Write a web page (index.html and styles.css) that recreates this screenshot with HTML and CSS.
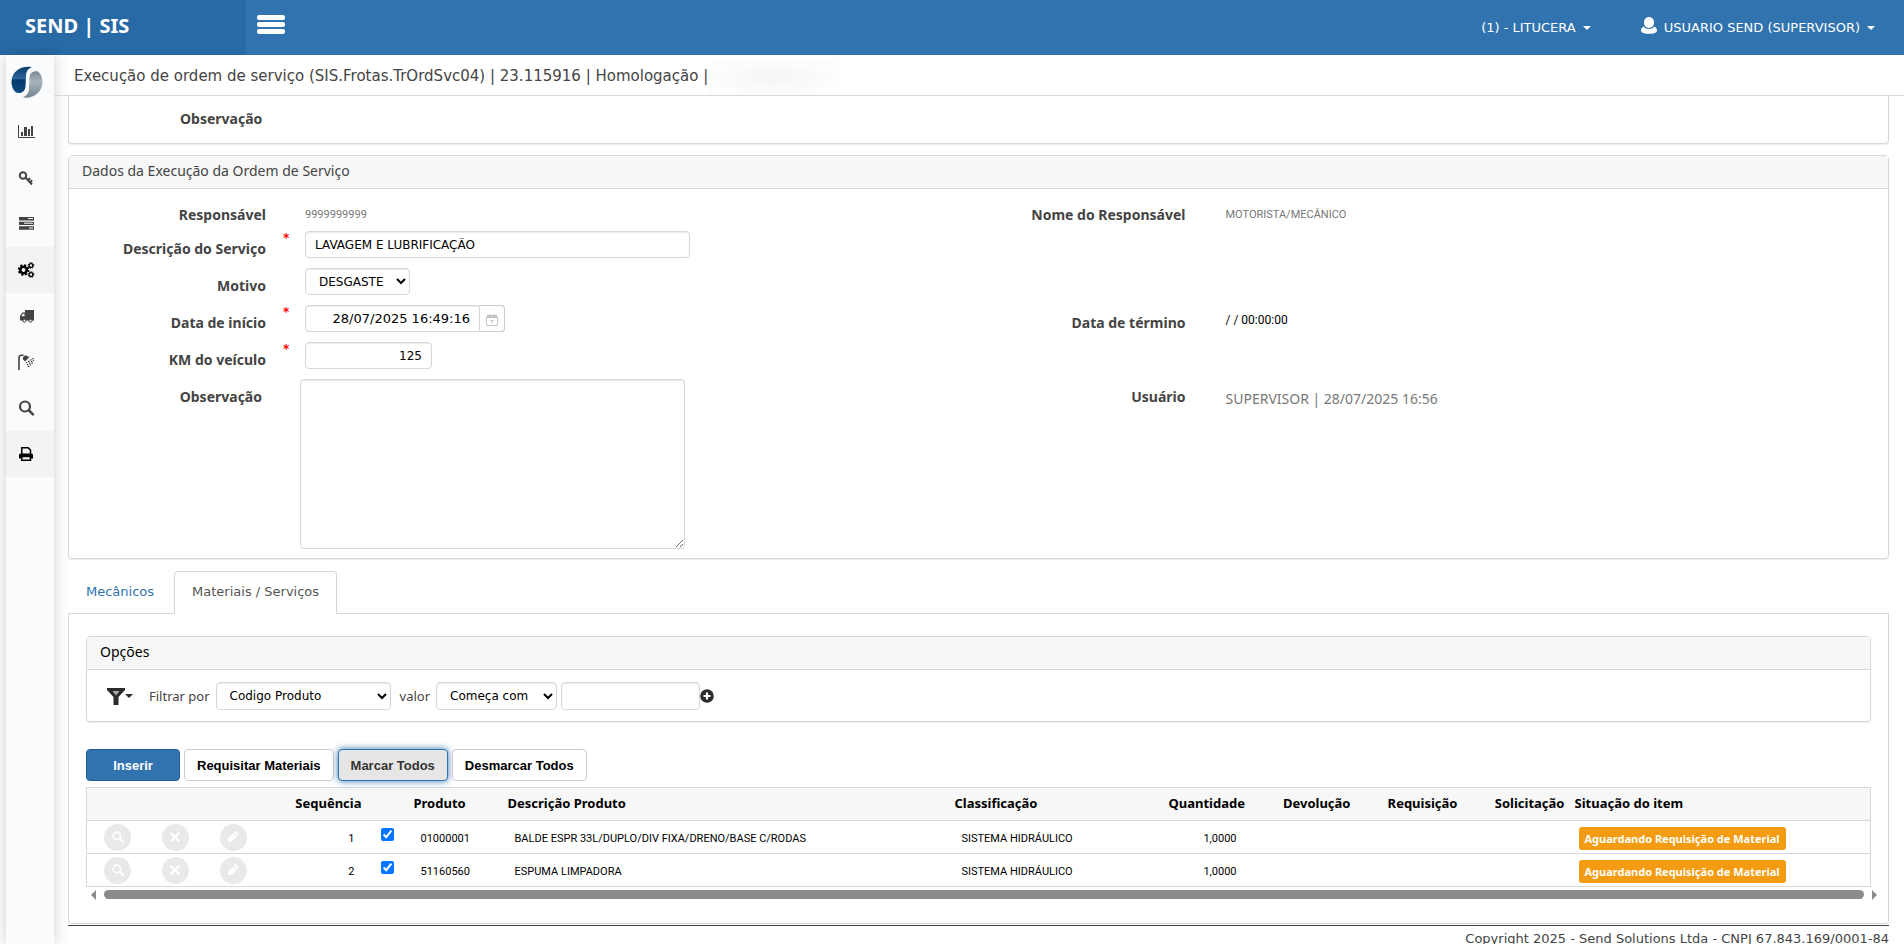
FILE: index.html
```html
<!DOCTYPE html>
<html lang="pt-BR">

<head>
    <meta charset="UTF-8">
    <meta name="viewport" content="width=device-width, initial-scale=1.0">
    <title>SEND | SIS</title>
    <link rel="stylesheet" href="styles.css">
</head>

<body>
    <!-- icons used more than once -->
    <svg class="sprite" aria-hidden="true">
        <symbol id="i-search" viewBox="0 0 16 16">
            <circle cx="6.5" cy="6.5" r="5" fill="none" stroke="currentColor" stroke-width="2.2" />
            <path d="M10.2 10.2l4.2 4.2" stroke="currentColor" stroke-width="2.6" stroke-linecap="round" />
        </symbol>
        <symbol id="i-remove" viewBox="0 0 16 16">
            <path d="M3 3l10 10M13 3L3 13" stroke="currentColor" stroke-width="3" stroke-linecap="round" />
        </symbol>
        <symbol id="i-pencil" viewBox="0 0 16 16">
            <path d="M1 15l.6-5.400 6.600-6.600 4.800 4.800-6.600 6.600zM9.200 2l1.400-1.400c.5-.5 1.100-.5 1.600 0l3.200 3.200c.5.5.5 1.100 0 1.600L14 6.800z" fill="currentColor" />
        </symbol>
    </svg>

    <header class="topbar">
        <a class="brand" href="#">SEND | SIS</a>
        <button class="menu-toggle" aria-label="Menu"><span></span><span></span><span></span></button>
        <nav class="top-links">
            <a href="#">(1) - LITUCERA <i class="caret"></i></a>
            <a href="#">
                <svg class="user-icon" viewBox="0 0 16 17">
                    <rect x="3" y="0" width="10" height="11" rx="5" fill="#fff" />
                    <path d="M2.500 9.500C1 10.300 0 11.800 0 13.500 0 16 4 16.800 8 16.800s8-.8 8-3.300c0-1.700-1-3.200-2.500-4C12.300 11 10.500 12 8 12S3.700 11 2.500 9.500z" fill="#fff" />
                </svg>
                USUARIO SEND (SUPERVISOR) <i class="caret"></i>
            </a>
        </nav>
    </header>

    <div class="wrapper">
        <nav class="sidebar">
            <a class="logo" href="#" aria-label="Send">
                <svg viewBox="0 0 32 32" width="32" height="32">
                    <defs>
                        <linearGradient id="g-blue" x1="0" y1="0" x2="0" y2="1">
                            <stop offset="0" stop-color="#0a3c6e" />
                            <stop offset=".45" stop-color="#2a659a" />
                            <stop offset=".5" stop-color="#06396c" />
                            <stop offset="1" stop-color="#0d4a80" />
                        </linearGradient>
                        <linearGradient id="g-gray" x1="0" y1="0" x2="0" y2="1">
                            <stop offset="0" stop-color="#7d8b95" />
                            <stop offset=".4" stop-color="#a9b4bb" />
                            <stop offset="1" stop-color="#74848f" />
                        </linearGradient>
                    </defs>
                    <path d="M21 1.300C11 -1 1 5 .5 15.500.3 20 2 24 5 26.500c5 1.500 9-.5 9.500-6L15 10c.3-4.500 2-7.500 6-8.700z" fill="url(#g-blue)" />
                    <path d="M27 5.500c-5-1-8.500 1.500-8.500 6L18 22c-.3 5-2 8-6.500 9.200C21 33.500 31 27 31.500 16.500c.1-4.500-1.500-8.500-4.500-11z" fill="url(#g-gray)" />
                </svg>
            </a>
            <a href="#" aria-label="Gráficos">
                <svg viewBox="0 0 17 16">
                    <path d="M.5 1v12.500H17" fill="none" stroke="currentColor" />
                    <path d="M3 8h2v4H3zM6 3h3v9H6zM10 5h2v7h-2zM13 2h2v10h-2z" fill="currentColor" />
                </svg>
            </a>
            <a href="#" aria-label="Acessos">
                <svg viewBox="0 0 17 16">
                    <circle cx="5" cy="5.500" r="3.200" fill="none" stroke="currentColor" stroke-width="2" />
                    <path d="M7.500 7.500l6.500 7M10 10l2.200-1.800M12.200 12.300l2-2" fill="none" stroke="currentColor" stroke-width="2" />
                </svg>
            </a>
            <a href="#" aria-label="Cadastros">
                <svg viewBox="0 0 17 16">
                    <path d="M1 1h15v3.400H1zM1 5.700h15v3.300H1zM1 10.300h15v3.400H1z" fill="currentColor" />
                    <path d="M10 2.500h5M6 7.200h9M11 12h4" stroke="#fff" />
                </svg>
            </a>
            <a class="active" href="#" aria-label="Processos">
                <svg viewBox="0 0 17 16">
                    <circle cx="5.500" cy="8" r="3.200" fill="none" stroke="currentColor" stroke-width="2.600" />
                    <circle cx="5.500" cy="8" r="4.900" fill="none" stroke="currentColor" stroke-width="1.800" stroke-dasharray="2.050 1.800" />
                    <circle cx="13" cy="3.500" r="1.900" fill="none" stroke="currentColor" stroke-width="1.400" />
                    <circle cx="13" cy="3.500" r="2.900" fill="none" stroke="currentColor" stroke-dasharray="1.200 1.080" />
                    <circle cx="13" cy="12.500" r="1.900" fill="none" stroke="currentColor" stroke-width="1.400" />
                    <circle cx="13" cy="12.500" r="2.900" fill="none" stroke="currentColor" stroke-dasharray="1.200 1.080" />
                </svg>
            </a>
            <a href="#" aria-label="Frotas">
                <svg viewBox="0 0 17 16">
                    <path fill-rule="evenodd" d="M7 2h9v10.500h-1.600a2 2 0 0 1-3.900 0H8.400a2 2 0 0 1-3.900 0H2V8l2.500-3.500H7zM6.500 5.700H5L3.400 8.200h3.100z" fill="currentColor" />
                    <circle cx="6.500" cy="12.700" r="1.500" fill="#fff" stroke="currentColor" />
                    <circle cx="12.500" cy="12.700" r="1.500" fill="#fff" stroke="currentColor" />
                </svg>
            </a>
            <a href="#" aria-label="Lavagem">
                <svg viewBox="0 0 17 16">
                    <path d="M1 16V3.500C1 1.500 2.500 1 5.500 1.300" fill="none" stroke="currentColor" stroke-width="1.600" />
                    <path d="M5 5.500c-.5-3 1.500-4.500 3.200-4 1 .2 1.600.8 2 1.500l2-.8L7 7.500z" fill="currentColor" />
                    <path d="M8 9l8-5M9 11l7-5M10 13l5-4.500" stroke="currentColor" stroke-width="1.200" stroke-dasharray="1.500 1" />
                </svg>
            </a>
            <a href="#" aria-label="Consultas"><svg><use href="#i-search" /></svg></a>
            <a class="active" href="#" aria-label="Relatórios">
                <svg viewBox="0 0 17 16">
                    <path d="M3.800 8V1.800h6.400l2.300 2.300V8" fill="none" stroke="currentColor" stroke-width="1.500" />
                    <path d="M1 12.500V9q0-1.500 1.500-1.500h11Q15 7.500 15 9v3.500h-2V10.500H3v2z" fill="currentColor" />
                    <path d="M3.800 10.500v3.700h8.700v-3.700z" fill="none" stroke="currentColor" stroke-width="1.500" />
                </svg>
            </a>
        </nav>

        <main class="page">
            <div class="page-title">
                <h1>Execução de ordem de serviço (SIS.Frotas.TrOrdSvc04) | 23.115916 | Homologação |</h1>
                <span class="hidden-name"></span>
            </div>

            <div class="content">
                <section class="panel panel-cut">
                    <span class="name">Observação</span>
                </section>

                <section class="panel">
                    <h2 class="panel-heading">Dados da Execução da Ordem de Serviço</h2>
                    <div class="form">
                        <div class="form-col">
                            <span class="name">Responsável</span><i></i>
                            <span class="value small">9999999999</span>

                            <label class="name" for="descricao">Descrição do Serviço</label><i class="req">*</i>
                            <input class="control w-long" id="descricao" type="text" value="LAVAGEM E LUBRIFICAÇÃO">

                            <label class="name" for="motivo">Motivo</label><i></i>
                            <select class="control w-reason" id="motivo">
                                <option>DESGASTE</option>
                            </select>

                            <label class="name" for="inicio">Data de início</label><i class="req">*</i>
                            <div class="date-group">
                                <input class="control" id="inicio" type="text" value="28/07/2025 16:49:16">
                                <button aria-label="Calendário">
                                    <svg viewBox="0 0 12 12" width="12" height="12">
                                        <path d="M.5 2.500h11v9H.5z" fill="none" stroke="#c4c4c4" />
                                        <path d="M1 1h10v3H1zM3 0h1v2H3zM8 0h1v2H8z" fill="#c4c4c4" />
                                        <path d="M4 6.500h3L5.500 9.500" fill="none" stroke="#c4c4c4" />
                                    </svg>
                                </button>
                            </div>

                            <label class="name" for="km">KM do veículo</label><i class="req">*</i>
                            <input class="control w-km" id="km" type="text" value="125">

                            <label class="name shift" for="obs">Observação</label><i></i>
                            <textarea class="control shift" id="obs"></textarea>
                        </div>
                        <div class="form-col right">
                            <span class="name">Nome do Responsável</span>
                            <span class="value small">MOTORISTA/MECÂNICO</span>
                            <span class="name row-4">Data de término</span>
                            <span class="value dark row-4">/ / 00:00:00</span>
                            <span class="name row-6">Usuário</span>
                            <span class="value row-6">SUPERVISOR | 28/07/2025 16:56</span>
                        </div>
                    </div>
                </section>

                <nav class="tabs">
                    <a href="#">Mecânicos</a>
                    <a class="current" href="#">Materiais / Serviços</a>
                </nav>
                <div class="tab-content">
                    <section class="panel">
                        <h2 class="panel-heading options">Opções</h2>
                        <div class="filter">
                            <button class="funnel" aria-label="Filtro">
                                <svg viewBox="0 0 18 18" width="18" height="18">
                                    <path d="M0 1h18v2l-6.500 7v8h-5v-8L0 3z" fill="#2b2b2b" />
                                    <path d="M5.500 4h7L9 8.500z" fill="#aaa" />
                                </svg>
                                <i class="caret"></i>
                            </button>
                            <label for="campo">Filtrar por</label>
                            <select class="control w-field" id="campo">
                                <option>Codigo Produto</option>
                            </select>
                            <label for="operador">valor</label>
                            <select class="control w-op" id="operador">
                                <option>Começa com</option>
                            </select>
                            <input class="control w-text" type="text" aria-label="Valor do filtro">
                            <button class="add" aria-label="Adicionar filtro">
                                <svg viewBox="0 0 14 14" width="14" height="14">
                                    <circle cx="7" cy="7" r="6.800" fill="#2b2b2b" />
                                    <path d="M7 3.500v7M3.500 7h7" stroke="#fff" stroke-width="2.200" />
                                </svg>
                            </button>
                        </div>
                    </section>

                    <div class="actions">
                        <button class="btn btn-primary">Inserir</button>
                        <button class="btn">Requisitar Materiais</button>
                        <button class="btn btn-focus">Marcar Todos</button>
                        <button class="btn">Desmarcar Todos</button>
                    </div>

                    <table class="items">
                        <colgroup>
                            <col class="c-icon"><col class="c-icon"><col class="c-icon">
                            <col class="c-seq"><col class="c-check"><col class="c-prod">
                            <col class="c-desc"><col class="c-class"><col class="c-qty">
                            <col class="c-num"><col class="c-num"><col class="c-num"><col>
                        </colgroup>
                        <thead>
                            <tr>
                                <th></th>
                                <th></th>
                                <th></th>
                                <th class="num">Sequência</th>
                                <th></th>
                                <th>Produto</th>
                                <th>Descrição Produto</th>
                                <th>Classificação</th>
                                <th class="num">Quantidade</th>
                                <th class="num">Devolução</th>
                                <th class="num">Requisição</th>
                                <th class="num">Solicitação</th>
                                <th>Situação do item</th>
                            </tr>
                        </thead>
                        <tbody>
                            <tr>
                                <td class="act"><button class="round" aria-label="Consultar"><svg><use href="#i-search" /></svg></button></td>
                                <td class="act"><button class="round" aria-label="Excluir"><svg><use href="#i-remove" /></svg></button></td>
                                <td class="act"><button class="round" aria-label="Editar"><svg><use href="#i-pencil" /></svg></button></td>
                                <td class="num">1</td>
                                <td class="check"><input type="checkbox" aria-label="Marcar item 1" checked></td>
                                <td>01000001</td>
                                <td>BALDE ESPR 33L/DUPLO/DIV FIXA/DRENO/BASE C/RODAS</td>
                                <td>SISTEMA HIDRÁULICO</td>
                                <td class="num">1,0000</td>
                                <td></td>
                                <td></td>
                                <td></td>
                                <td><span class="badge">Aguardando Requisição de Material</span></td>
                            </tr>
                            <tr>
                                <td class="act"><button class="round" aria-label="Consultar"><svg><use href="#i-search" /></svg></button></td>
                                <td class="act"><button class="round" aria-label="Excluir"><svg><use href="#i-remove" /></svg></button></td>
                                <td class="act"><button class="round" aria-label="Editar"><svg><use href="#i-pencil" /></svg></button></td>
                                <td class="num">2</td>
                                <td class="check"><input type="checkbox" aria-label="Marcar item 2" checked></td>
                                <td>51160560</td>
                                <td>ESPUMA LIMPADORA</td>
                                <td>SISTEMA HIDRÁULICO</td>
                                <td class="num">1,0000</td>
                                <td></td>
                                <td></td>
                                <td></td>
                                <td><span class="badge">Aguardando Requisição de Material</span></td>
                            </tr>
                        </tbody>
                    </table>
                    <div class="scroll">
                        <i class="arrow-left"></i>
                        <i class="thumb"></i>
                        <i class="arrow-right"></i>
                    </div>
                </div>

                <footer class="footer">Copyright 2025 - Send Solutions Ltda - CNPJ 67.843.169/0001-84</footer>
            </div>
        </main>
    </div>
</body>

</html>
```

FILE: styles.css
```css
* {
    padding: 0;
    margin: 0;
    box-sizing: border-box;
}

body {
    height: 100vh;
    overflow: hidden;
    display: flex;
    flex-direction: column;
    background-color: #fff;
    color: #444;
    font-family: "DejaVu Sans", sans-serif;
    font-size: 13px;
}

a {
    color: inherit;
    text-decoration: none;
}

button,
input,
select,
textarea {
    font-family: inherit;
    font-size: 12px;
}

button {
    border: 0;
    background: none;
}

.sprite {
    position: absolute;
    width: 0;
    height: 0;
}

.caret {
    display: inline-block;
    border-top: 4px solid;
    border-left: 4px solid transparent;
    border-right: 4px solid transparent;
}

/* top bar */
.topbar {
    display: flex;
    flex: none;
    height: 55px;
    background-color: #3173af;
    color: #fff;
}

.brand {
    width: 246px;
    padding-left: 25px;
    background-color: #286aa6;
    font-family: "Noto Sans", sans-serif;
    font-size: 20px;
    font-weight: bold;
    line-height: 52px;
}

.menu-toggle {
    display: flex;
    flex-direction: column;
    gap: 2px;
    width: 28px;
    margin: 15px 0 0 11px;
}

.menu-toggle span {
    width: 28px;
    height: 5px;
    border-radius: 2px;
    background-color: #fff;
}

.top-links {
    display: flex;
    gap: 50px;
    margin-left: auto;
    padding-right: 29px;
}

.top-links a {
    display: flex;
    align-items: center;
    gap: 7px;
}

.user-icon {
    width: 16px;
    height: 17px;
    margin-bottom: 4px;
}

/* side menu */
.wrapper {
    display: flex;
    flex: 1;
    min-height: 0;
}

.sidebar {
    flex: none;
    width: 48px;
    margin-left: 6px;
    background-color: #f9fbfd;
    box-shadow: 0 0 14px rgba(0, 0, 0, .2);
}

.sidebar a {
    display: flex;
    align-items: center;
    height: 46px;
    padding-left: 12px;
}

.sidebar a.logo {
    height: 54px;
    padding-left: 5px;
}

.sidebar a.active {
    background-color: #f3f3f3;
    color: #000;
}

.sidebar a:not(.logo) svg {
    width: 17px;
    height: 16px;
}

/* page */
.page {
    flex: 1;
    min-width: 0;
    overflow: hidden;
}

.page-title {
    display: flex;
    align-items: flex-end;
    height: 41px;
    padding-left: 20px;
    border-bottom: 1px solid #d8d8d8;
}

.page-title h1 {
    font-size: 15px;
    font-weight: normal;
    line-height: 38px;
}

.hidden-name {
    width: 131px;
    height: 34px;
    background: radial-gradient(closest-side, #f5f5f5, #fdfdfd);
}

.content {
    padding: 0 15px 0 14px;
}

.panel {
    border: 1px solid #d8d8d8;
    border-radius: 4px;
    box-shadow: 0 1px 1px rgba(0, 0, 0, .08);
}

.panel-cut {
    height: 48px;
    margin-bottom: 11px;
    padding: 13px 0 0 111px;
    border-top: 0;
    border-radius: 0 0 4px 4px;
}

.panel-heading {
    height: 33px;
    padding-left: 13px;
    border-bottom: 1px solid #d8d8d8;
    background-color: #f7f7f7;
    font-family: "Noto Sans", sans-serif;
    font-size: 14px;
    font-weight: normal;
    line-height: 30px;
}

.name {
    font-family: "Noto Sans", sans-serif;
    font-size: 14px;
    font-weight: bold;
    line-height: 20px;
}

.form {
    display: grid;
    grid-template-columns: 1fr 1fr;
    padding: 8px 0 9px;
}

.form-col {
    display: grid;
    grid-template-columns: 197px 39px 1fr;
    grid-template-rows: 24px repeat(4, 27px) 170px;
    row-gap: 10px;
    align-items: start;
}

.form-col.right {
    grid-template-columns: 207px 1fr;
    column-gap: 40px;
}

.form-col .name {
    padding-top: 8px;
    text-align: right;
}

.row-4 {
    grid-row: 4;
}

.row-6 {
    grid-row: 6;
}

.value {
    padding-top: 10px;
    color: #777;
    font-family: "Noto Sans", sans-serif;
    font-size: 14px;
    line-height: 20px;
}

.value.small {
    padding-top: 8px;
    font-family: Roboto, sans-serif;
    font-size: 11px;
}

.value.dark {
    padding-top: 5px;
    color: #000;
    font-family: Roboto, sans-serif;
    font-size: 12px;
}

.req {
    padding-left: 17px;
    color: #f00;
    font-style: normal;
    font-size: 12px;
    font-weight: bold;
    line-height: 14px;
}

.control {
    height: 27px;
    padding: 0 9px;
    border: 1px solid #d8d8d8;
    border-radius: 4px;
    background-color: #fff;
    box-shadow: inset 0 1px 1px rgba(0, 0, 0, .08);
    color: #000;
}

.form select.control {
    padding: 0 0 0 9px;
}

.w-long {
    width: 385px;
}

.w-reason {
    width: 105px;
}

.w-km {
    width: 127px;
    text-align: right;
}

textarea.control {
    width: 385px;
    height: 170px;
}

.form-col .name.shift {
    margin-right: 4px;
}

textarea.shift {
    margin-left: -5px;
}

.date-group {
    display: flex;
}

.date-group .control {
    width: 175px;
    border-radius: 4px 0 0 4px;
    font-size: 13px;
    text-align: right;
}

.date-group button {
    width: 25px;
    padding-top: 6px;
    border: 1px solid #ccc;
    border-left: 0;
    border-radius: 0 4px 4px 0;
}

/* tabs */
.tabs {
    display: flex;
    gap: 2px;
    margin-top: 12px;
    border-bottom: 1px solid #d8d8d8;
}

.tabs a {
    height: 42px;
    padding: 0 17px;
    border: 1px solid transparent;
    color: #3173af;
    line-height: 40px;
}

.tabs a.current {
    height: 43px;
    margin-bottom: -1px;
    border-color: #d8d8d8;
    border-bottom-color: #fff;
    border-radius: 4px 4px 0 0;
    color: #555;
}

.tab-content {
    padding: 22px 17px 21px;
    border: 1px solid #d8d8d8;
    border-top: 0;
    border-radius: 0 0 4px 4px;
}

.panel-heading.options {
    color: #000;
}

.filter {
    display: flex;
    align-items: center;
    height: 51px;
    padding-left: 20px;
    font-family: "Noto Sans", sans-serif;
}

.filter .control {
    height: 28px;
    font-family: "DejaVu Sans", sans-serif;
}

.funnel {
    display: flex;
    align-items: center;
    margin-right: 16px;
    color: #2b2b2b;
}

.w-field {
    width: 175px;
    margin: 0 9px 0 6px;
}

.w-op {
    width: 121px;
    margin: 0 4px 0 6px;
}

.w-text {
    width: 139px;
}

.add {
    height: 14px;
}

.actions {
    display: flex;
    gap: 4px;
    margin: 27px 0 6px;
}

.btn {
    height: 32px;
    padding: 0 12px;
    border: 1px solid #ccc;
    border-radius: 4px;
    background-color: #fff;
    color: #000;
    font-family: "Liberation Sans", sans-serif;
    font-size: 13px;
    font-weight: bold;
}

.btn-primary {
    width: 94px;
    border-color: #205d97;
    background-color: #3173af;
    color: #fff;
}

.btn-focus {
    border-color: #3173af;
    background-color: #e6e6e6;
    box-shadow: 0 0 7px #3173af;
    color: #333;
}

/* items table */
.items {
    width: 100%;
    border: 1px solid #d8d8d8;
    border-collapse: collapse;
    table-layout: fixed;
    color: #000;
    text-align: left;
}

.c-icon {
    width: 58px;
}

.c-seq {
    width: 106px;
}

.c-check {
    width: 42px;
}

.c-prod {
    width: 94px;
}

.c-desc {
    width: 447px;
}

.c-class {
    width: 214px;
}

.c-qty {
    width: 85px;
}

.c-num {
    width: 107px;
}

.items th {
    height: 33px;
    padding: 0 5px 2px;
    background-color: #f7f7f7;
    font-family: "Noto Sans", sans-serif;
    font-size: 13px;
    white-space: nowrap;
}

.items td {
    height: 33px;
    padding: 3px 12px 0;
    border-top: 1px solid #d8d8d8;
    font-family: Roboto, sans-serif;
    font-size: 11px;
}

.items .num {
    text-align: right;
}

.items td.act {
    padding: 0 0 0 17px;
}

.items td.check {
    padding: 0 0 6px 14px;
}

.check input {
    display: block;
    width: 13px;
    height: 13px;
    accent-color: #0075ff;
}

.round {
    display: flex;
    align-items: center;
    justify-content: center;
    width: 27px;
    height: 27px;
    border-radius: 50%;
    background-color: #e9e9e9;
    color: #fff;
}

.round svg {
    width: 12px;
    height: 12px;
}

.badge {
    display: inline-block;
    margin-left: -3px;
    padding: 0 6px;
    border-radius: 3px;
    background-color: #f39c12;
    color: #fff;
    font-family: "Noto Sans", sans-serif;
    font-size: 11px;
    font-weight: bold;
    line-height: 23px;
}

.scroll {
    display: flex;
    align-items: center;
    gap: 8px;
    height: 15px;
    margin-right: -10px;
    padding: 0 4px 0 5px;
}

.scroll .thumb {
    flex: 1;
    height: 9px;
    border-radius: 5px;
    background-color: #8b8b8b;
}

.arrow-left,
.arrow-right {
    border-top: 5px solid transparent;
    border-bottom: 5px solid transparent;
}

.arrow-left {
    border-right: 5px solid #8b8b8b;
}

.arrow-right {
    border-left: 5px solid #8b8b8b;
}

.footer {
    margin-top: 1px;
    border-top: 1px solid #444;
    line-height: 26px;
    text-align: right;
}
```
